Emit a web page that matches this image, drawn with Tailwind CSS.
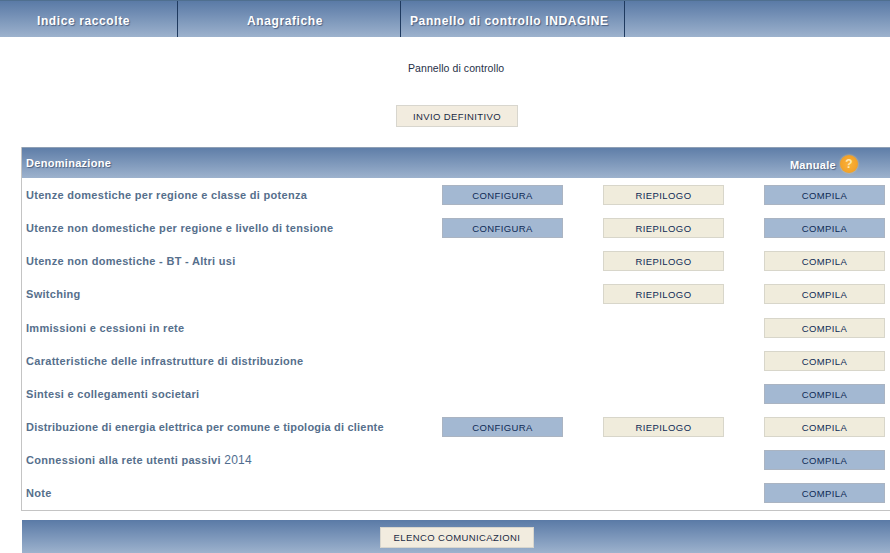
<!DOCTYPE html>
<html lang="it">
<head>
  <meta charset="UTF-8" />
  <title>Pannello di controllo</title>
  <script src="https://cdn.jsdelivr.net/npm/@tailwindcss/browser@4"></script>
</head>
<body class="bg-white h-[553px] w-[890px] overflow-hidden font-['Liberation_Sans',sans-serif] text-[#0e2a55]">

  <!-- menu -->
  <nav class="h-[37px] flex bg-gradient-to-b from-[#5a7aa6] to-[#9db2cd] border-t border-[#4f6f8f] text-white font-bold text-[12px] tracking-[0.6px] [text-shadow:1px_1px_1px_#4a5f80]">
    <a class="w-[178px] border-r border-[#1f3a5f] pl-[37px] pt-[11px]">Indice raccolte</a>
    <a class="w-[223px] border-r border-[#1f3a5f] pl-[69px] pt-[11px]">Anagrafiche</a>
    <a class="w-[224px] border-r border-[#1f3a5f] pl-[9px] pt-[11px] whitespace-nowrap">Pannello di controllo INDAGINE</a>
  </nav>

  <p class="mt-[25px] ml-[408px] text-[10.5px] tracking-[0.08px] leading-[12px] text-[#1f3048]">Pannello di controllo</p>

  <div class="mt-[29px] ml-[396px]">
    <button class="w-[122px] h-[22px] pt-[2px] bg-[#f2ecdf] border border-[#d8d6ce] text-[9.5px] tracking-[0.4px] text-[#1a2a44]">INVIO DEFINITIVO</button>
  </div>

  <!-- tabella -->
  <section class="mt-[20px] ml-[21px] w-[869px] border-l border-[#c4c4c4]">
    <div class="h-[31px] flex items-center bg-gradient-to-b from-[#5f7ea8] to-[#9db2cd] border-t border-[#8fa0b5] text-white font-bold text-[11px] tracking-[0.3px] [text-shadow:1px_1px_1px_#4a5f80]">
      <span class="ml-[4px]">Denominazione</span>
      <span class="ml-auto pt-[5px]">Manuale</span>
      <span class="ml-[4px] mr-[32px] mt-[2px] w-[18px] h-[18px] rounded-full bg-radial from-[#fbb23a] to-[#ee9a1e] shadow-[0_0_2px_#f8c878] flex items-center justify-center text-[12px] text-[#ffe9b0] [text-shadow:none]">?</span>
    </div>

    <div class="border-b border-[#c4c4c4] pt-[7px] pb-[7px] grid gap-y-[13px] text-[11px]">
      <div class="h-[20px] flex items-center">
        <span class="ml-[4px] w-[416px] font-bold text-[#566f8c] tracking-[0.3px] whitespace-nowrap">Utenze domestiche per regione e classe di potenza</span>
        <button class="w-[121px] h-[20px] pt-[2px] bg-[#a3b8d2] border border-[#aab4c2] text-[9.5px] tracking-[0.4px]">CONFIGURA</button>
        <button class="ml-[40px] w-[121px] h-[20px] pt-[2px] bg-[#f0ecdc] border border-[#d8d6ca] text-[9.5px] tracking-[0.4px]">RIEPILOGO</button>
        <button class="ml-[40px] w-[121px] h-[20px] pt-[2px] bg-[#a3b8d2] border border-[#aab4c2] text-[9.5px] tracking-[0.4px]">COMPILA</button>
      </div>
      <div class="h-[20px] flex items-center">
        <span class="ml-[4px] w-[416px] font-bold text-[#566f8c] tracking-[0.3px] whitespace-nowrap">Utenze non domestiche per regione e livello di tensione</span>
        <button class="w-[121px] h-[20px] pt-[2px] bg-[#a3b8d2] border border-[#aab4c2] text-[9.5px] tracking-[0.4px]">CONFIGURA</button>
        <button class="ml-[40px] w-[121px] h-[20px] pt-[2px] bg-[#f0ecdc] border border-[#d8d6ca] text-[9.5px] tracking-[0.4px]">RIEPILOGO</button>
        <button class="ml-[40px] w-[121px] h-[20px] pt-[2px] bg-[#a3b8d2] border border-[#aab4c2] text-[9.5px] tracking-[0.4px]">COMPILA</button>
      </div>
      <div class="h-[20px] flex items-center">
        <span class="ml-[4px] w-[577px] font-bold text-[#566f8c] tracking-[0.3px]">Utenze non domestiche - BT - Altri usi</span>
        <button class="w-[121px] h-[20px] pt-[2px] bg-[#f0ecdc] border border-[#d8d6ca] text-[9.5px] tracking-[0.4px]">RIEPILOGO</button>
        <button class="ml-[40px] w-[121px] h-[20px] pt-[2px] bg-[#f0ecdc] border border-[#d8d6ca] text-[9.5px] tracking-[0.4px]">COMPILA</button>
      </div>
      <div class="h-[20px] flex items-center">
        <span class="ml-[4px] w-[577px] font-bold text-[#566f8c] tracking-[0.3px]">Switching</span>
        <button class="w-[121px] h-[20px] pt-[2px] bg-[#f0ecdc] border border-[#d8d6ca] text-[9.5px] tracking-[0.4px]">RIEPILOGO</button>
        <button class="ml-[40px] w-[121px] h-[20px] pt-[2px] bg-[#f0ecdc] border border-[#d8d6ca] text-[9.5px] tracking-[0.4px]">COMPILA</button>
      </div>
      <div class="h-[20px] mt-[1px] flex items-center">
        <span class="ml-[4px] w-[738px] font-bold text-[#566f8c] tracking-[0.3px]">Immissioni e cessioni in rete</span>
        <button class="w-[121px] h-[20px] pt-[2px] bg-[#f0ecdc] border border-[#d8d6ca] text-[9.5px] tracking-[0.4px]">COMPILA</button>
      </div>
      <div class="h-[20px] flex items-center">
        <span class="ml-[4px] w-[738px] font-bold text-[#566f8c] tracking-[0.3px]">Caratteristiche delle infrastrutture di distribuzione</span>
        <button class="w-[121px] h-[20px] pt-[2px] bg-[#f0ecdc] border border-[#d8d6ca] text-[9.5px] tracking-[0.4px]">COMPILA</button>
      </div>
      <div class="h-[20px] flex items-center">
        <span class="ml-[4px] w-[738px] font-bold text-[#566f8c] tracking-[0.3px]">Sintesi e collegamenti societari</span>
        <button class="w-[121px] h-[20px] pt-[2px] bg-[#a3b8d2] border border-[#aab4c2] text-[9.5px] tracking-[0.4px]">COMPILA</button>
      </div>
      <div class="h-[20px] flex items-center">
        <span class="ml-[4px] w-[416px] font-bold text-[#566f8c] tracking-[0.2px] whitespace-nowrap">Distribuzione di energia elettrica per comune e tipologia di cliente</span>
        <button class="w-[121px] h-[20px] pt-[2px] bg-[#a3b8d2] border border-[#aab4c2] text-[9.5px] tracking-[0.4px]">CONFIGURA</button>
        <button class="ml-[40px] w-[121px] h-[20px] pt-[2px] bg-[#f0ecdc] border border-[#d8d6ca] text-[9.5px] tracking-[0.4px]">RIEPILOGO</button>
        <button class="ml-[40px] w-[121px] h-[20px] pt-[2px] bg-[#f0ecdc] border border-[#d8d6ca] text-[9.5px] tracking-[0.4px]">COMPILA</button>
      </div>
      <div class="h-[20px] flex items-center">
        <span class="ml-[4px] w-[738px] font-bold text-[#566f8c] tracking-[0.3px]">Connessioni alla rete utenti passivi <span class="font-normal text-[12px] text-[#4f6d8f]">2014</span></span>
        <button class="w-[121px] h-[20px] pt-[2px] bg-[#a3b8d2] border border-[#aab4c2] text-[9.5px] tracking-[0.4px]">COMPILA</button>
      </div>
      <div class="h-[20px] flex items-center">
        <span class="ml-[4px] w-[738px] font-bold text-[#566f8c] tracking-[0.3px]">Note</span>
        <button class="w-[121px] h-[20px] pt-[2px] bg-[#a3b8d2] border border-[#aab4c2] text-[9.5px] tracking-[0.4px]">COMPILA</button>
      </div>
    </div>
  </section>

  <!-- piede -->
  <footer class="mt-[9px] ml-[22px] w-[868px] h-[33px] flex items-start bg-gradient-to-b from-[#5a7aa6] to-[#9db2cd] pt-[7px] pl-[358px]">
    <button class="w-[154px] h-[21px] pt-[1px] bg-[#f2ecdf] border border-[#d8d6ce] text-[9.5px] tracking-[0.4px] text-[#1a2a44]">ELENCO COMUNICAZIONI</button>
  </footer>
</body>
</html>
